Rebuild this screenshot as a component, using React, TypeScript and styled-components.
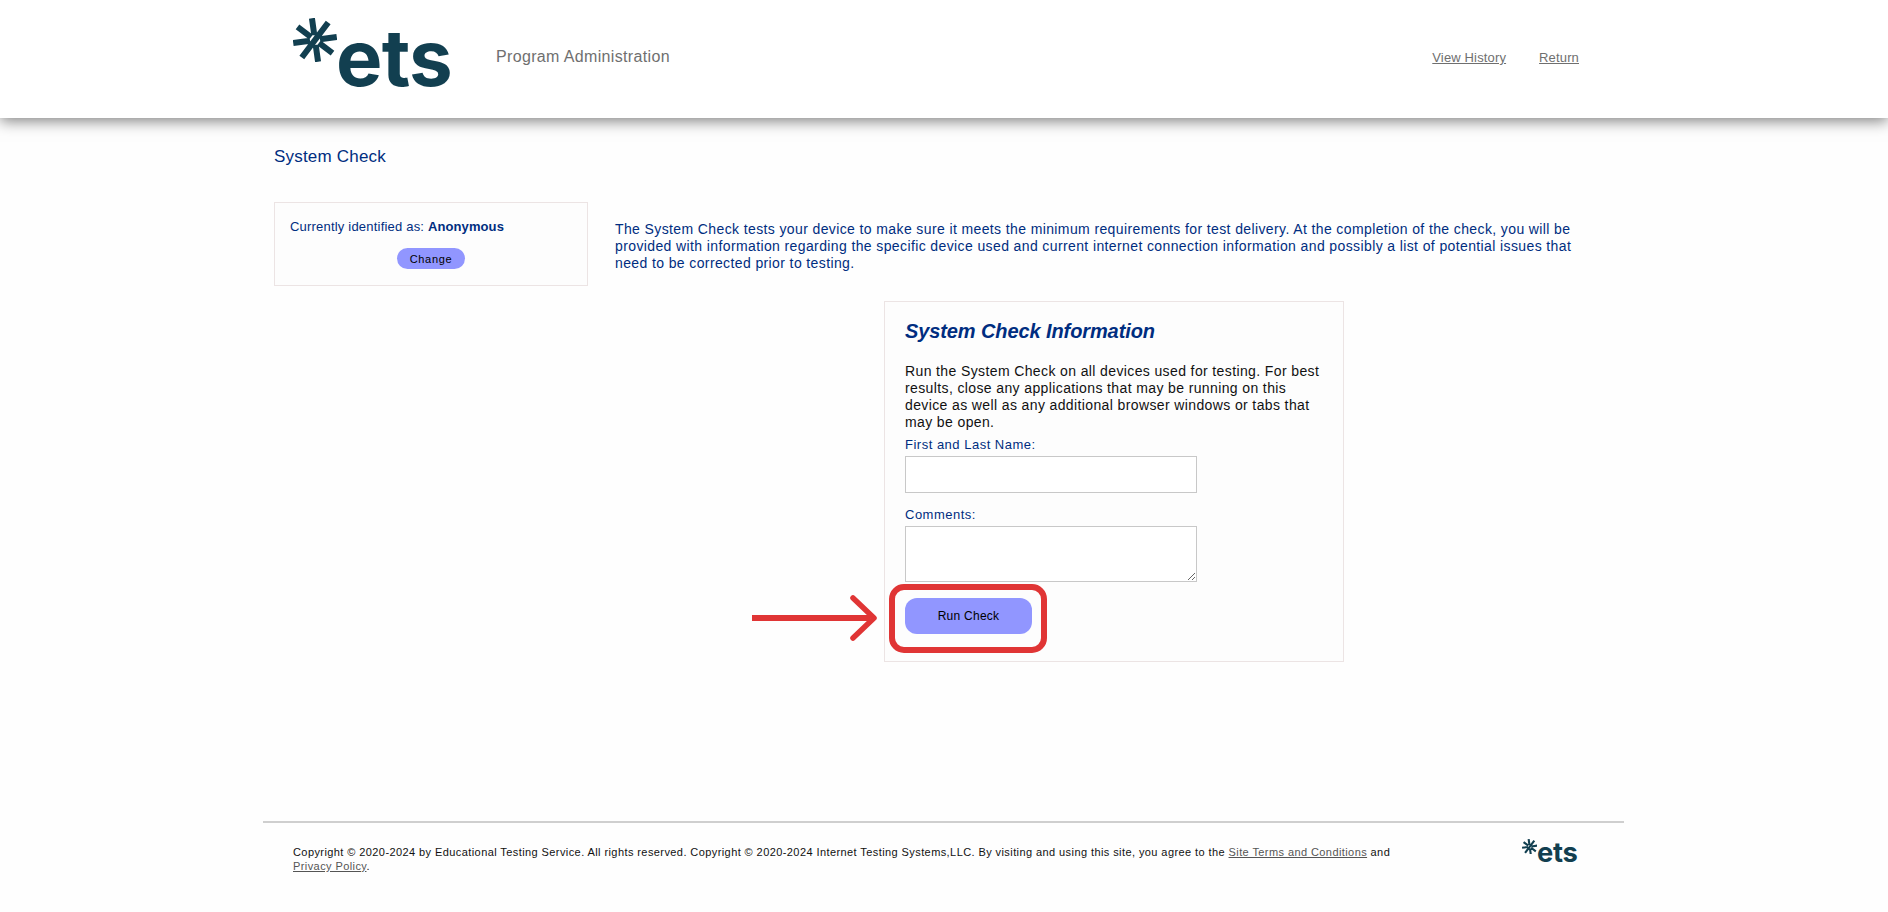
import styled, { createGlobalStyle } from "styled-components";

const GlobalStyle = createGlobalStyle`
  html, body {
    margin: 0;
    padding: 0;
    background: #fefefe;
    font-family: "Liberation Sans", Arial, sans-serif;
  }
  * { box-sizing: border-box; }
`;

const Page = styled.div`
  width: 1888px;
  height: 912px;
  overflow: hidden;
  display: flex;
  flex-direction: column;
`;

const Header = styled.header`
  height: 118px;
  flex: none;
  background: #fff;
  box-shadow: 0 3px 14px rgba(0, 0, 0, 0.5);
  display: flex;
  align-items: flex-start;
  padding: 18px 309px 0 293px;
`;

const LogoWrap = styled.div<{ $scale: number }>`
  display: flex;
  align-items: flex-start;
  color: #123f50;
  height: ${(p) => 70 * p.$scale}px;
  width: ${(p) => 157 * p.$scale}px;
  flex: none;
`;

const LogoText = styled.span<{ $size: number; $top: number; $left: number }>`
  font-family: Inter, "Liberation Sans", sans-serif;
  font-weight: 700;
  font-size: ${(p) => p.$size}px;
  line-height: 1;
  letter-spacing: -0.01em;
  margin-top: ${(p) => p.$top}px;
  margin-left: ${(p) => p.$left}px;
`;

const ProgramName = styled.div`
  margin: 30px 0 0 46px;
  font-size: 16px;
  line-height: 18px;
  letter-spacing: 0.35px;
  color: #6f6f6f;
`;

const TopLinks = styled.nav`
  margin: 32px 0 0 auto;
  display: flex;
  gap: 33px;
`;

const TopLink = styled.a`
  font-size: 13px;
  line-height: 15px;
  letter-spacing: 0.15px;
  color: #6f6f6f;
  text-decoration: underline;
`;

const Main = styled.main`
  flex: 1;
  padding: 30px 0 0 274px;
  position: relative;
`;

const PageTitle = styled.h1`
  margin: 0;
  font-size: 17px;
  font-weight: 400;
  line-height: 18px;
  letter-spacing: 0.2px;
  color: #002d80;
`;

const Columns = styled.div`
  display: flex;
  margin-top: 36px;
  width: 1305px;
  gap: 27px;
`;

const IdentityCard = styled.div`
  flex: none;
  width: 314px;
  height: 84px;
  background: #fdfdfd;
  border: 1px solid #ece4e4;
  padding: 16px 15px 0;
  color: #002d80;
`;

const IdentityLine = styled.div`
  font-size: 13px;
  line-height: 16px;
  letter-spacing: 0.2px;
`;

const IdentityName = styled.strong`
  font-size: 13px;
  letter-spacing: 0.1px;
`;

const ChangeRow = styled.div`
  display: flex;
  justify-content: center;
  margin-top: 13px;
`;

const ChangeButton = styled.button`
  width: 68px;
  height: 21px;
  border: none;
  border-radius: 11px;
  padding: 0;
  background: #9196ff;
  color: #000;
  font: 400 11px "Liberation Sans", Arial, sans-serif;
  letter-spacing: 0.7px;
`;

const Content = styled.div`
  flex: 1;
  padding-top: 19px;
`;

const Intro = styled.p`
  margin: 0;
  font-size: 14px;
  line-height: 17px;
  letter-spacing: 0.385px;
  color: #002d80;
`;

const InfoCard = styled.section`
  margin: 29px 0 0 269px;
  width: 460px;
  height: 361px;
  background: #fdfdfd;
  border: 1px solid #ece4e4;
  padding: 18px 20px 0;
`;

const InfoTitle = styled.h2`
  margin: 0;
  font-size: 20px;
  line-height: 23px;
  font-style: italic;
  font-weight: 700;
  letter-spacing: -0.1px;
  color: #002d80;
`;

const InfoText = styled.p`
  margin: 20px 0 0;
  font-size: 14px;
  line-height: 17px;
  letter-spacing: 0.38px;
  color: #111;
`;

const FieldLabel = styled.label`
  display: block;
  margin-top: 6px;
  font-size: 13px;
  line-height: 16px;
  letter-spacing: 0.5px;
  color: #002d80;
`;

const TextInput = styled.input`
  display: block;
  margin: 3px 0 0;
  width: 292px;
  height: 37px;
  background: #fff;
  border: 1px solid #c8c8c8;
  border-radius: 0;
`;

const CommentsLabel = styled(FieldLabel)`
  margin-top: 14px;
`;

const TextArea = styled.textarea`
  display: block;
  margin: 3px 0 0;
  width: 292px;
  height: 56px;
  background: #fff;
  border: 1px solid #c8c8c8;
  border-radius: 0;
`;

const RunButton = styled.button`
  display: block;
  margin-top: 16px;
  width: 127px;
  height: 36px;
  border: none;
  border-radius: 12px;
  background: #9196ff;
  color: #000;
  font: 400 12px "Liberation Sans", Arial, sans-serif;
  letter-spacing: 0.25px;
`;

const Highlight = styled.div`
  position: absolute;
  left: 889px;
  top: 466px;
  width: 158px;
  height: 69px;
  border: 6px solid #e03535;
  border-radius: 15px;
`;

const ArrowSvg = styled.svg`
  position: absolute;
  left: 750px;
  top: 475px;
`;

const Footer = styled.footer`
  margin: 0 264px 0 263px;
  height: 91px;
  flex: none;
  border-top: 2px solid #cfcfcf;
  padding: 22px 0 0 30px;
  display: flex;
  justify-content: space-between;
`;

const Legal = styled.p`
  margin: 0;
  width: 1120px;
  font-size: 11px;
  line-height: 14px;
  letter-spacing: 0.415px;
  color: #111;
`;

const LegalLink = styled.a`
  color: #555;
  text-decoration: underline;
`;

const FooterLogo = styled.div`
  margin: -6px 47px 0 0;
`;

function EtsLogo({ scale }: { scale: number }) {
  const size = 44 * scale;
  return (
    <LogoWrap $scale={scale}>
      <svg width={size} height={size} viewBox="0 0 44 44" style={{ flex: "none" }}>
        <g stroke="currentColor" strokeWidth="6" fill="none" transform="rotate(-8 22 22)">
          <path d="M22 0V17M22 27V44M0 22H17M27 22H44M6.5 6.5L18.5 18.5M25.5 25.5L37.5 37.5M37.5 6.5L6.5 37.5" />
        </g>
      </svg>
      <LogoText $size={78 * scale} $top={1 * scale} $left={-1 * scale}>
        ets
      </LogoText>
    </LogoWrap>
  );
}

export default function App() {
  return (
    <Page>
      <GlobalStyle />
      <Header>
        <EtsLogo scale={1} />
        <ProgramName>Program Administration</ProgramName>
        <TopLinks>
          <TopLink href="#">View History</TopLink>
          <TopLink href="#">Return</TopLink>
        </TopLinks>
      </Header>
      <Main>
        <PageTitle>System Check</PageTitle>
        <Columns>
          <IdentityCard>
            <IdentityLine>
              Currently identified as: <IdentityName>Anonymous</IdentityName>
            </IdentityLine>
            <ChangeRow>
              <ChangeButton>Change</ChangeButton>
            </ChangeRow>
          </IdentityCard>
          <Content>
            <Intro>
              The System Check tests your device to make sure it meets the minimum requirements for test delivery. At the
              completion of the check, you will be provided with information regarding the specific device used and current
              internet connection information and possibly a list of potential issues that need to be corrected prior to
              testing.
            </Intro>
            <InfoCard>
              <InfoTitle>System Check Information</InfoTitle>
              <InfoText>
                Run the System Check on all devices used for testing. For best results, close any applications that may be
                running on this device as well as any additional browser windows or tabs that may be open.
              </InfoText>
              <FieldLabel>First and Last Name:</FieldLabel>
              <TextInput type="text" />
              <CommentsLabel>Comments:</CommentsLabel>
              <TextArea />
              <RunButton>Run Check</RunButton>
            </InfoCard>
          </Content>
        </Columns>
        <Highlight />
        <ArrowSvg width="130" height="50" viewBox="0 0 130 50">
          <path d="M2 25H120" stroke="#e03535" strokeWidth="6" fill="none" />
          <path d="M103 5L124 25L103 45" stroke="#e03535" strokeWidth="5.5" strokeLinecap="round" strokeLinejoin="round" fill="none" />
        </ArrowSvg>
      </Main>
      <Footer>
        <Legal>
          Copyright © 2020-2024 by Educational Testing Service. All rights reserved. Copyright © 2020-2024 Internet Testing
          Systems,LLC. By visiting and using this site, you agree to the <LegalLink href="#">Site Terms and Conditions</LegalLink>{" "}
          and <LegalLink href="#">Privacy Policy</LegalLink>.
        </Legal>
        <FooterLogo>
          <EtsLogo scale={0.35} />
        </FooterLogo>
      </Footer>
    </Page>
  );
}
